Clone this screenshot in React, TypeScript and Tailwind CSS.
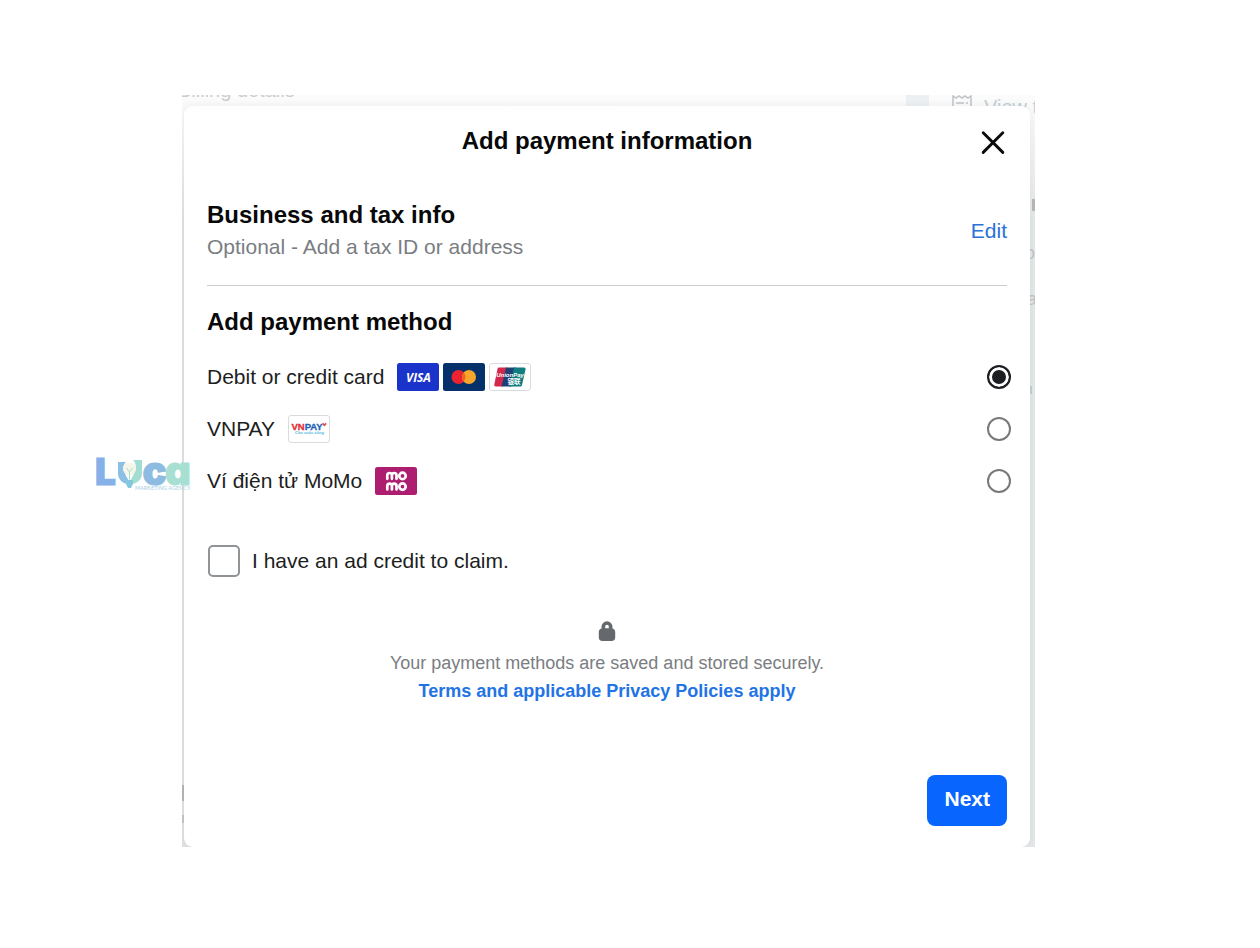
import { useState } from "react";
import type { ReactNode } from "react";

function VisaBadge() {
  return (
    <svg className="h-7 w-[42px]" viewBox="0 0 42 28" role="img" aria-label="Visa">
      <rect width="42" height="28" rx="2.500" fill="#1a34cb" />
      <text x="21.500" y="18.500" textAnchor="middle" fontSize="12" fontWeight="700" fontStyle="italic" fontFamily="Open Sans, sans-serif" fill="#fff">VISA</text>
    </svg>
  );
}

function MastercardBadge() {
  return (
    <svg className="h-7 w-[42px]" viewBox="0 0 42 28" role="img" aria-label="Mastercard">
      <rect width="42" height="28" rx="2.500" fill="#04306b" />
      <circle cx="15.500" cy="14" r="7" fill="#eb2330" />
      <circle cx="26" cy="14" r="7" fill="#f6a62a" />
      <path d="M20.750 9.400a7 7 0 0 1 0 9.200a7 7 0 0 1 0-9.200z" fill="#f26322" />
    </svg>
  );
}

function UnionPayBadge() {
  return (
    <svg className="h-7 w-[42px]" viewBox="0 0 42 28" role="img" aria-label="UnionPay">
      <rect x=".5" y=".5" width="41" height="27" rx="2.500" fill="#fff" stroke="#d9dbde" />
      <path d="M10 4.500H18L13.500 23.500H7C5.500 23.500 5 22.700 5.300 21.500L8.500 6C8.800 5 9.200 4.500 10 4.500z" fill="#d3284b" />
      <path d="M17 4.500H27L22.500 23.500H12.500z" fill="#1d4175" />
      <path d="M25 4.500H35C36.300 4.500 36.800 5.200 36.500 6.500L33 22C32.700 23 32.200 23.500 31 23.500H20.500z" fill="#107d80" />
      <text x="21" y="14" textAnchor="middle" fontSize="6" fontWeight="700" fontStyle="italic" fontFamily="Liberation Sans, sans-serif" fill="#fff">UnionPay</text>
      <text x="25" y="20.500" textAnchor="middle" fontSize="6.500" fontWeight="700" fontFamily="Noto Sans CJK SC, sans-serif" fill="#fff">银联</text>
    </svg>
  );
}

function VnpayBadge() {
  return (
    <svg className="h-7 w-[42px]" viewBox="0 0 42 28" role="img" aria-label="VNPAY">
      <rect x=".5" y=".5" width="41" height="27" rx="2.500" fill="#fff" stroke="#d9dbde" />
      <text x="3.500" y="14.500" fontSize="9.500" fontWeight="700" fontFamily="Liberation Sans, sans-serif" fill="#e02d35" stroke="#e02d35" strokeWidth=".3">
        VN<tspan fill="#1c62b5" stroke="#1c62b5">PAY</tspan>
      </text>
      <path d="M34 9l1.200-1.200 1.200 1.200 1.200-1.200L38.800 9l-2.400 2.500z" fill="#e34b52" />
      <text x="7" y="19" fontSize="4" fontWeight="600" fontStyle="italic" fontFamily="Liberation Sans, sans-serif" fill="#4fb7e3">Cho cuộc sống</text>
    </svg>
  );
}

function MomoBadge() {
  return (
    <svg className="h-7 w-[42px]" viewBox="0 0 42 28" role="img" aria-label="MoMo">
      <rect width="42" height="28" rx="2.500" fill="#ad1e70" />
      <g fill="none" stroke="#fff" strokeWidth="2.700" strokeLinecap="round">
        <path d="M12.300 11.800V8.300a2.300 2.300 0 0 1 4.600 0v3.500M16.900 8.300a2.300 2.300 0 0 1 4.600 0v3.500" />
        <circle cx="27.500" cy="8.900" r="3.200" />
        <path d="M12.300 22.500V19a2.300 2.300 0 0 1 4.600 0v3.500M16.900 19a2.300 2.300 0 0 1 4.600 0v3.500" />
        <circle cx="27.500" cy="19.600" r="3.200" />
      </g>
    </svg>
  );
}

function LucaLogo() {
  return (
    <svg className="absolute -left-[86px] top-[357px] h-10 w-24" viewBox="0 0 96 40" role="img" aria-label="Luca Marketing Agency">
      <g fontFamily="Inter, sans-serif" fontWeight="900" strokeWidth="1" className="[font-feature-settings:'cv11']">
        <text x="-1" y="32.500" fontSize="37" fill="#86b1e8" stroke="#86b1e8">L</text>
        <text x="46.500" y="32.500" fontSize="40" fill="#8dbbe1" stroke="#8dbbe1">c</text>
        <text x="69" y="32.500" fontSize="40" fill="#a7dfd2" stroke="#a7dfd2">a</text>
      </g>
      <path d="M22 10h8c-4 4-3 8-1 11 1 4 4 6 4 11-7 0-11-5-11-11z" fill="#8bbfe6" />
      <path d="M37 8h9v13c0 6-4 11-12 11 0-5 3-7 4-11 2-4 3-9-1-13z" fill="#a2ddd2" />
      <circle cx="33.500" cy="17" r="6.500" fill="#f5f6e7" />
      <path d="M33.500 29v-9m-3-4 3 4 3-4" fill="none" stroke="#a8ddd4" strokeWidth="1" />
      <path d="M30 28h7v4l-2 4h-3l-2-4z" fill="#84c8e0" />
      <text x="39" y="38" fontSize="5.500" fontFamily="Lato, sans-serif" fill="#a5d0e2">MARKETING AGENCY</text>
    </svg>
  );
}

function Backdrop() {
  return (
    <div className="pointer-events-none absolute inset-0 overflow-hidden bg-linear-to-r from-[#e2e2e2] from-50% to-[#e4e7e8]" aria-hidden="true">
      <div className="absolute inset-x-0 top-0 h-[120px] bg-linear-to-b from-[#fcfcfc] to-transparent" />
      <div className="absolute right-[106px] top-0 h-4 w-[23px] bg-[#edf0f3]" />
      <span className="absolute -left-1 -top-[17px] text-xl/6 text-[#cdcdcd]">Billing details</span>
      <svg className="absolute right-[62px] top-0 h-5 w-[22px]" viewBox="0 0 22 20" fill="none" stroke="#bfc3c6" strokeWidth="1.500">
        <path d="M2 20V1l3 2 3-2 3 2 3-2 3 2 3-2v19M5 8h8m2 0h2" />
      </svg>
      <span className="absolute left-[802px] top-0 whitespace-nowrap text-xl/6 text-[#c4d0d7]">View transactions</span>
      <span className="absolute right-0 top-[104px] h-3 w-[3px] bg-[#b5b7b9]" />
      <span className="absolute right-0 top-[146px] text-lg leading-6 text-[#bfc3c6]">o</span>
      <span className="absolute -right-[2px] top-[192px] text-lg leading-6 text-[#bfc3c6]">a</span>
      <span className="absolute right-[3px] top-[291px] h-2 w-[2px] bg-[#b9d2d0]" />
      <span className="absolute left-0 top-[690px] h-4 w-[2px] bg-[#b5b5b5]" />
      <span className="absolute left-0 top-[720px] h-2 w-[2px] bg-[#c5c5c5]" />
    </div>
  );
}

type Method = { id: string; label: string; badges: ReactNode };

const methods: Method[] = [
  { id: "card", label: "Debit or credit card", badges: <><VisaBadge /><MastercardBadge /><UnionPayBadge /></> },
  { id: "vnpay", label: "VNPAY", badges: <VnpayBadge /> },
  { id: "momo", label: "Ví điện tử MoMo", badges: <MomoBadge /> },
];

export default function App() {
  const [method, setMethod] = useState("card");

  return (
    <main className="min-h-screen bg-white pb-[100px] pl-[182px] pr-[225px] pt-[95px] font-['Liberation_Sans',Arial,sans-serif] text-[21px] text-[#1c1e21]">
      <div className="relative">
        <div className="relative overflow-hidden pl-[2px] pr-[5px] pt-[11px]">
          <Backdrop />
          <section role="dialog" aria-labelledby="dialog-title" className="relative rounded-[9px] bg-white px-[23px] pb-[21px] shadow-[0_0_10px_rgba(0,0,0,0.06)]">
            <header className="grid h-[70px] grid-cols-[1fr_auto_1fr] items-center">
              <h1 id="dialog-title" className="col-start-2 text-2xl font-bold text-[#080809]">Add payment information</h1>
              <button type="button" aria-label="Close" className="justify-self-end">
                <svg className="size-7" viewBox="0 0 28 28" fill="none" stroke="#0c0c0d" strokeWidth="2.900" strokeLinecap="round">
                  <path d="M4.200 5.800l19.600 19.600M23.800 5.800L4.200 25.400" />
                </svg>
              </button>
            </header>

            <div className="flex items-center justify-between border-b border-[#cbcccd] pb-[22px] pt-[23px] leading-8">
              <div>
                <h2 className="text-2xl/8 font-bold text-[#080809]">Business and tax info</h2>
                <p className="text-[#7a7d81]">Optional - Add a tax ID or address</p>
              </div>
              <a href="#edit" className="text-[#2a72d8]">Edit</a>
            </div>

            <fieldset className="mt-5">
              <legend className="text-2xl/8 font-bold text-[#080809]">Add payment method</legend>
              <div className="mt-[13px]">
                {methods.map((m) => (
                  <label key={m.id} className="-mr-1 flex h-[52px] items-center gap-[13px]">
                    <span>{m.label}</span>
                    <span className="flex gap-1">{m.badges}</span>
                    <input
                      type="radio"
                      name="method"
                      value={m.id}
                      checked={method === m.id}
                      onChange={() => setMethod(m.id)}
                      className="ml-auto size-6 shrink-0 appearance-none rounded-full border-2 border-[#77797b] checked:border-[#1c1e21] checked:bg-[#1c1e21] checked:shadow-[inset_0_0_0_3px_#fff]"
                    />
                  </label>
                ))}
              </div>
            </fieldset>

            <label className="mt-[38px] flex items-center gap-3 pl-px leading-8">
              <input type="checkbox" className="size-8 appearance-none rounded-[5px] border-2 border-[#919497] checked:bg-[#0866ff]" />
              <span>I have an ad credit to claim.</span>
            </label>

            <div className="mt-11 flex flex-col items-center text-center text-lg/7">
              <svg className="mb-2 h-5 w-[18px]" viewBox="0 0 18 20" aria-hidden="true">
                <path d="M3.500 7.500V5.800a5.500 5.500 0 0 1 11 0v1.700c1.800.4 2.700 1.700 2.700 3.700v5c0 2.500-1.200 3.800-3.700 3.800h-9C2 20 .8 18.700.8 16.200v-5c0-2 .9-3.300 2.700-3.700zm3.700-.2h3.600V5.500a1.800 1.800 0 0 0-3.600 0z" fill="#65686c" />
              </svg>
              <p className="text-[#7a7d81]">Your payment methods are saved and stored securely.</p>
              <a href="#terms" className="font-bold text-[#2274e5]">Terms and applicable Privacy Policies apply</a>
            </div>

            <div className="mt-[70px] flex justify-end">
              <button type="button" className="h-[51px] rounded-lg bg-[#0866ff] px-[17px] pb-1 font-bold text-white">Next</button>
            </div>
          </section>
        </div>
        <LucaLogo />
      </div>
    </main>
  );
}
